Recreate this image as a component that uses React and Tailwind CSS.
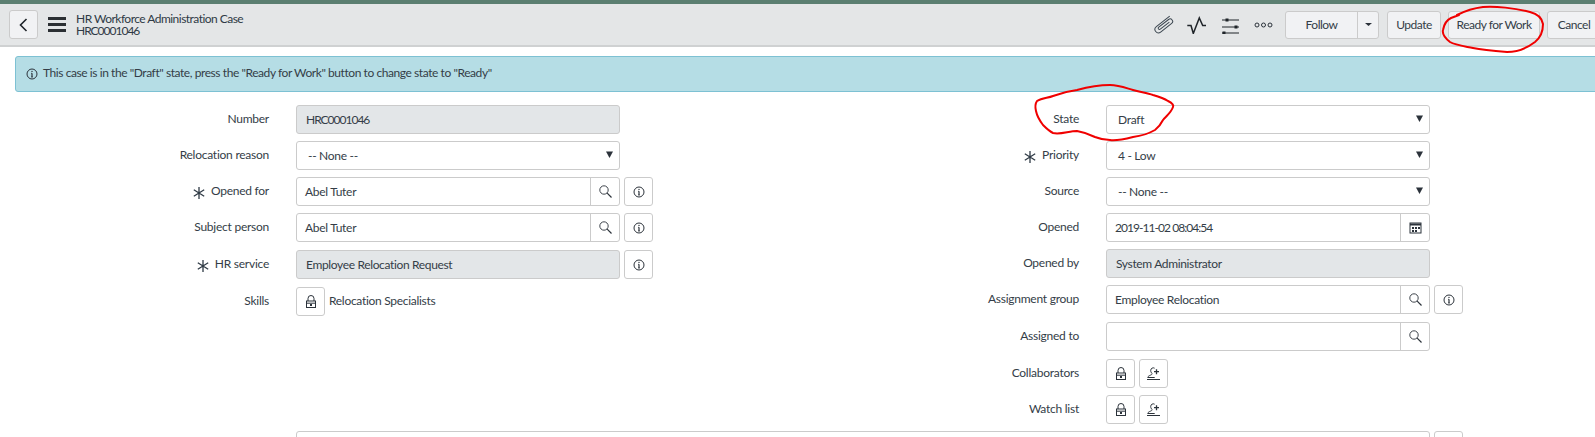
const font = { fontFamily: '"Lato", "Liberation Sans", sans-serif' }

const ICON = '#2b323a'
const DIGITS = 'tracking-[-1px]'

const InfoIcon = ({ size = 12, color = ICON }) => (
  <svg width={size} height={size} viewBox="0 0 12 12" fill="none" stroke={color} strokeWidth="1">
    <circle cx="6" cy="6" r="5" />
    <path d="M6 5.2V9" strokeWidth="1.2" />
    <path d="M5 5.3h1M5 9h2" strokeWidth="0.8" />
    <circle cx="6" cy="3.4" r="0.7" fill={color} stroke="none" />
  </svg>
)

const SearchIcon = () => (
  <svg width="13" height="13" viewBox="0 0 13 13" fill="none" stroke={ICON} strokeWidth="0.9">
    <circle cx="5" cy="5" r="4.2" />
    <path d="M8.2 8.2l4.3 4.3" strokeWidth="1.2" />
  </svg>
)

const LockIcon = () => (
  <svg width="12" height="13" viewBox="0 0 12 13" fill="none" stroke={ICON} strokeWidth="1">
    <path d="M3 6V3.5a3 3 0 0 1 6 0V6" />
    <rect x="1.5" y="6" width="9" height="6.5" />
    <path d="M1.5 8.2h9" />
    <rect x="5" y="9" width="2" height="2" fill={ICON} stroke="none" />
  </svg>
)

const AddUserIcon = () => (
  <svg width="13" height="13" viewBox="0 0 13 13" fill="none" stroke={ICON} strokeWidth="1">
    <path d="M7.6 1.2a2.6 2.6 0 0 0-3.9 2.2c0 1.6.8 2.6 1.4 3 0 .9-.5 1.3-1.5 1.7C2.3 8.6 1 9.2.7 10.5h7" />
    <path d="M9.5 2.2v5M7 4.7h5" strokeWidth="1.3" />
    <path d="M0 12.5h13" />
  </svg>
)

const CalendarIcon = () => (
  <svg width="13" height="12" viewBox="0 0 13 12" fill="none" stroke={ICON} strokeWidth="1">
    <rect x="1" y="1" width="11" height="10" />
    <path d="M1 2.5h11" strokeWidth="2" />
    <g fill={ICON} stroke="none">
      <rect x="3" y="5" width="2" height="2" />
      <rect x="6" y="5" width="2" height="2" />
      <rect x="9" y="5" width="2" height="2" />
      <rect x="3" y="8" width="2" height="2" />
      <rect x="6" y="8" width="2" height="2" />
    </g>
  </svg>
)

const Required = () => (
  <svg width="12" height="12" viewBox="0 0 12 12" stroke="#2f3a45" strokeWidth="1.3" className="mr-[6px] mt-[2px]">
    <path d="M6 0v12M.8 2.8l10.4 6.4M11.2 2.8.8 9.2" />
  </svg>
)

const SquareBtn = ({ children }) => (
  <button className="flex h-[29px] w-[29px] shrink-0 items-center justify-center rounded-[3px] border border-[#cbcbcb] bg-white">
    {children}
  </button>
)

const Label = ({ text, required, width }) => (
  <div className={`flex shrink-0 items-center justify-end text-[12px] tracking-[-0.25px] text-[#343d47] ${width}`}>
    {required && <Required />}
    <span className="-mt-px">{text}</span>
  </div>
)

const Readonly = ({ value, tc = 'tracking-[-0.35px]' }) => (
  <div className={`flex h-[29px] w-[324px] items-center rounded-[3px] border border-[#cbcbcb] bg-[#e3e6e8] pl-[9px] text-[12px] text-[#343d47] ${tc}`}>
    {value}
  </div>
)

const Select = ({ value }) => (
  <div className="flex h-[29px] w-[324px] items-center justify-between rounded-[3px] border border-[#cbcbcb] bg-white pl-[11px] pr-[6px] text-[12px] tracking-[-0.3px] text-[#343d47]">
    <span>{value}</span>
    <svg width="7" height="7" viewBox="0 0 7 7" className="-mt-[3px]"><path d="M0 .5h7L3.5 7z" fill="#2b323a" /></svg>
  </div>
)

const Lookup = ({ value, icon = <SearchIcon />, tc = 'tracking-[-0.3px]' }) => (
  <div className="flex h-[29px] w-[324px] rounded-[3px] border border-[#cbcbcb] bg-white text-[12px] text-[#343d47]">
    <div className={`flex flex-1 items-center pl-[8px] ${tc}`}>{value}</div>
    <div className="flex w-[29px] items-center justify-center border-l border-[#cbcbcb]">{icon}</div>
  </div>
)

const Row = ({ label, required, width, className = '', children }) => (
  <div className={`flex h-[29px] ${className}`}>
    <Label text={label} required={required} width={width} />
    <div className="ml-[27px] flex items-center gap-[4px]">{children}</div>
  </div>
)

const HeaderBtn = ({ children, className = '' }) => (
  <button className={`flex h-[28px] items-center justify-center rounded-[3px] border border-[#cbcbcb] bg-[#f1f2f4] text-[12px] tracking-[-0.5px] text-[#343d47] ${className}`}>
    {children}
  </button>
)

export default function App() {
  const lw = 'w-[269px]'
  const rw = 'w-[284px]'

  return (
    <div className="relative h-[437px] w-[1595px] overflow-hidden bg-white" style={font}>
      <div className="h-[4px] bg-[#5b7f71]" />

      {/* Header */}
      <header className="flex h-[43px] items-center border-b-2 border-[#cfd1d2] bg-[#e4e6e7]">
        <button className="ml-[9px] flex h-[29px] w-[29px] items-center justify-center rounded-[3px] border border-[#cbcbcb] bg-[#f1f2f4]">
          <svg width="9" height="14" viewBox="0 0 9 14" fill="none" stroke="#1f2429" strokeWidth="1.6"><path d="M7.5 1 1.5 7l6 6" /></svg>
        </button>
        <div className="ml-[10px] flex w-[18px] flex-col gap-[3px]">
          <div className="h-[3px] bg-[#2b2f33]" />
          <div className="h-[3px] bg-[#2b2f33]" />
          <div className="h-[3px] bg-[#2b2f33]" />
        </div>
        <div className="ml-[10px] text-[12px] leading-[12px] text-[#2f3a45]">
          <div className="tracking-[-0.53px]">HR Workforce Administration Case</div>
          <div className={DIGITS}>HRC0001046</div>
        </div>

        <div className="ml-auto flex items-center">
          <svg width="20" height="20" viewBox="0 0 20 20" fill="none" stroke="#3b4650" strokeWidth="1" className="mr-[12px]">
            <path transform="rotate(-38 10 10)" d="M20 6.5H3a3.5 3.5 0 0 0 0 7H17a2.5 2.5 0 0 0 0-5H4.5a1.2 1.2 0 0 0 0 2.5H16" />
          </svg>
          <svg width="21" height="18" viewBox="0 0 21 18" fill="none" stroke="#1f2429" strokeWidth="1.5" className="mr-[14px]">
            <path d="M1.3 9.5H5L7.3 17.5 13.3 2l3.4 7.5H20" />
          </svg>
          <svg width="19" height="18" viewBox="0 0 19 18" fill="none" stroke="#1f2429" strokeWidth="1" className="mr-[14px]">
            <path d="M1 4h17M1 11h17M1 17h17" />
            <path d="M6 2.6v2.8M15 9.6v2.8M3 15.6v2.8" strokeWidth="3" />
          </svg>
          <svg width="19" height="6" viewBox="0 0 19 6" fill="none" stroke="#2b323a" strokeWidth="1" className="mr-[12px]">
            <circle cx="3" cy="3" r="2" />
            <circle cx="9.5" cy="3" r="2" />
            <circle cx="16" cy="3" r="2" />
          </svg>
          <div className="flex h-[28px] w-[94px] rounded-[3px] border border-[#cbcbcb] bg-[#f1f2f4] text-[12px] tracking-[-0.5px] text-[#343d47]">
            <div className="flex w-[71px] items-center justify-center">Follow</div>
            <div className="flex flex-1 items-center justify-center border-l border-[#cbcbcb]">
              <svg width="7" height="3" viewBox="0 0 7 3"><path d="M0 0h7L3.5 3z" fill="#2b323a" /></svg>
            </div>
          </div>
          <HeaderBtn className="ml-[8px] w-[54px]">Update</HeaderBtn>
          <HeaderBtn className="ml-[7px] w-[92px]">Ready for Work</HeaderBtn>
          <HeaderBtn className="-mr-[6px] ml-[7px] w-[54px]">Cancel</HeaderBtn>
        </div>
      </header>

      {/* Alert */}
      <div className="-mr-[4px] ml-[15px] mt-[9px] flex h-[36px] items-center rounded-l-[3px] border border-[#7dc1d3] bg-[#b5dde5] pl-[10px] text-[12px] tracking-[-0.43px] text-[#343d47]">
        <InfoIcon />
        <span className="ml-[5px] -mt-[2px]">This case is in the "Draft" state, press the "Ready for Work" button to change state to "Ready"</span>
      </div>

      {/* Form */}
      <div className="mt-[13px] flex">
        <div className="flex w-[795px] flex-col gap-[7px]">
          <Row label="Number" width={lw}><Readonly value="HRC0001046" tc={DIGITS} /></Row>
          <Row label="Relocation reason" width={lw}><Select value="-- None --" /></Row>
          <Row label="Opened for" required width={lw}>
            <Lookup value="Abel Tuter" />
            <SquareBtn><InfoIcon /></SquareBtn>
          </Row>
          <Row label="Subject person" width={lw}>
            <Lookup value="Abel Tuter" />
            <SquareBtn><InfoIcon /></SquareBtn>
          </Row>
          <Row label="HR service" required width={lw} className="mt-px">
            <Readonly value="Employee Relocation Request" />
            <SquareBtn><InfoIcon /></SquareBtn>
          </Row>
          <Row label="Skills" width={lw} className="mt-px">
            <SquareBtn><LockIcon /></SquareBtn>
            <span className="-mt-[2px] text-[12px] tracking-[-0.3px] text-[#343d47]">Relocation Specialists</span>
          </Row>
        </div>

        <div className="flex flex-col gap-[7px]">
          <Row label="State" width={rw}><Select value="Draft" /></Row>
          <Row label="Priority" required width={rw}><Select value="4 - Low" /></Row>
          <Row label="Source" width={rw}><Select value="-- None --" /></Row>
          <Row label="Opened" width={rw}><Lookup value="2019-11-02 08:04:54" icon={<CalendarIcon />} tc="tracking-[-0.95px]" /></Row>
          <Row label="Opened by" width={rw}><Readonly value="System Administrator" /></Row>
          <Row label="Assignment group" width={rw}>
            <Lookup value="Employee Relocation" />
            <SquareBtn><InfoIcon /></SquareBtn>
          </Row>
          <Row label="Assigned to" width={rw} className="mt-px"><Lookup value="" /></Row>
          <Row label="Collaborators" width={rw} className="mt-px">
            <SquareBtn><LockIcon /></SquareBtn>
            <SquareBtn><AddUserIcon /></SquareBtn>
          </Row>
          <Row label="Watch list" width={rw}>
            <SquareBtn><LockIcon /></SquareBtn>
            <SquareBtn><AddUserIcon /></SquareBtn>
          </Row>
        </div>
      </div>

      {/* Full width field, cut off by the bottom of the page */}
      <div className="ml-[296px] mt-[7px] flex gap-[4px]">
        <div className="h-[29px] w-[1134px] rounded-[3px] border border-[#cbcbcb] bg-white" />
        <SquareBtn />
      </div>

      {/* Red pen marks drawn over the screenshot */}
      <svg className="pointer-events-none absolute left-0 top-0" width="1595" height="437" fill="none" stroke="#f00000" strokeWidth="2" strokeLinejoin="round" strokeLinecap="round">
        <path d="M1457 15C1465 11 1475 8 1483 7C1495 6 1515 8 1530 12C1538 14 1542 18 1543 24C1543 32 1540 38 1535 42C1527 48 1518 52 1507 52C1495 51 1483 50 1473 48C1463 46 1455 45 1450 42C1445 38 1442 34 1443 30C1444 24 1447 20 1451 18L1459 15" />
        <path d="M1037 101C1042 98 1048 98 1053 96C1061 93 1069 91 1077 90C1088 87 1100 85 1110 85C1119 85 1126 88 1133 90C1140 92 1147 93 1153 95C1160 97 1165 99 1168 101C1172 103 1174 105 1173 107C1171 113 1166 116 1163 120C1161 124 1159 127 1155 130C1148 134 1141 136 1133 137C1125 139 1117 141 1110 140C1104 140 1100 139 1095 137C1089 134 1083 132 1077 131C1069 131 1060 135 1053 133C1049 131 1046 128 1043 125C1040 121 1037 116 1036 111C1035 107 1035 104 1037 101" />
      </svg>
    </div>
  )
}
